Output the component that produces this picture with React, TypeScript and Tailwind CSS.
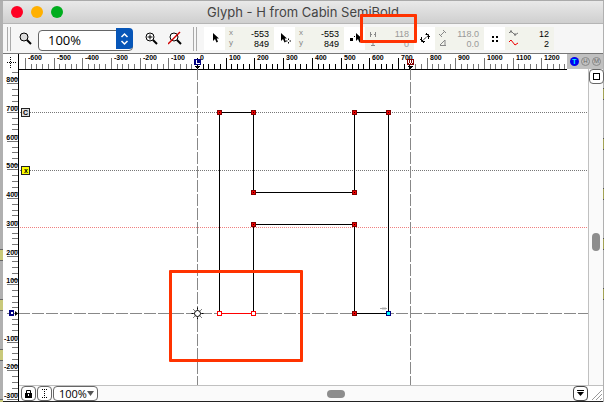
import React from 'react'

const UNIT = 0.287
const range = (from: number, to: number, step: number) =>
  Array.from({ length: Math.floor((to - from) / step) + 1 }, (_, i) => from + i * step)
const px = (units: number) => Math.round(units * UNIT)

const rulerFont = "'Liberation Sans', sans-serif"

function HorizontalRuler() {
  return (
    <svg className="block h-[17px] w-full min-w-0 flex-1" aria-label="Horizontal ruler">
      <g transform="translate(178 0)">
        {range(-600, 1340, 20).map((u) => {
          const major = u % 100 === 0
          const color = u < 0 || u > 740 ? '#777' : '#000'
          return <rect key={u} x={px(u)} y={major ? 4 : 10} width="1" height={major ? 11 : 5} fill={color} />
        })}
        {range(-600, 1200, 100).map((u) => (
          <text key={u} x={px(u) + 3} y="6" fontSize="7" fontWeight="700" fontFamily={rulerFont}>
            {u}
          </text>
        ))}
        <g shapeRendering="crispEdges">
          <rect x="-3" y="5" width="7" height="6" fill="#000080" />
          <path d="M-.5 6v3.500h3" stroke="#fff" fill="none" />
          <path d="M-2 12h5l-2.500 3z" />
        </g>
        <g shapeRendering="crispEdges">
          <rect x="210" y="5" width="7" height="6" fill="#800000" />
          <path d="M211.500 6v3M213.500 6v3M215.500 6v3M212 9.500h1M214 9.500h1" stroke="#fff" />
          <path d="M211 12h5l-2.500 3z" />
        </g>
      </g>
      <rect y="15" width="100%" height="1" />
    </svg>
  )
}

function VerticalRuler() {
  return (
    <svg className="block h-full w-4 shrink-0 bg-white" aria-label="Vertical ruler">
      <g transform="translate(0 244)">
        {range(-300, 840, 20).map((u) => {
          const major = u % 100 === 0
          return <rect key={u} x={major ? 4 : 9} y={-px(u)} width={major ? 11 : 6} height="1" fill="#777" />
        })}
        {range(-300, 800, 100).filter((u) => u !== 0).map((u) => (
          <text key={u} x="15" y={-px(u) - 1} fontSize="7" fontWeight="700" textAnchor="end" fontFamily={rulerFont}>
            {u}
          </text>
        ))}
        <rect x="6" y="-3" width="5" height="6" fill="#000080" />
        <rect x="8" y="-1" width="2" height="2" fill="#fff" />
        <path d="M12-2l3 2.500-3 2.500z" />
      </g>
      <rect x="15" width="1" height="100%" />
    </svg>
  )
}

const nodes = [[22, -201], [56, -201], [157, -201], [191, -201], [56, -121], [157, -121], [56, -89], [157, -89], [157, 0]]

function Canvas() {
  return (
    <svg className="block h-full w-full" aria-label="Glyph outline H">
      <g transform="translate(178 244)" shapeRendering="crispEdges" fill="none">
        <path d="M-177-200.500H1200M-177-142.500H1200" stroke="#777" strokeDasharray="1 1" />
        <path d="M-177-85.500H1200" stroke="#f08080" strokeDasharray="1 1" />
        <path d="M-179 .5H1200" stroke="#888" strokeDasharray="12 2" />
        <path d="M.5-245V1200M213.500-245V1200" stroke="#888" strokeDasharray="12 2" />
        <path d="M22.500 .5V-200.500H56.500V-120.500H157.500V-200.500H191.500V.5H157.500V-88.500H56.500V.5" stroke="#000" />
        <path d="M22 .5h35" stroke="#f00" />
        {nodes.map(([x, y]) => (
          <g key={`${x},${y}`}>
            <rect x={x - 1.5} y={y - 1.5} width="4" height="4" fill="#f00000" stroke="#800000" />
            <rect x={x} y={y} width="1" height="1" fill="#200" />
          </g>
        ))}
        <rect x="20.500" y="-1.500" width="4" height="4" fill="#fff" stroke="#f00" />
        <rect x="54.500" y="-1.500" width="4" height="4" fill="#fff" stroke="#f00" />
        <rect x="189.500" y="-1.500" width="4" height="4" fill="#0ff" stroke="#000080" />
        <path d="M183-4.500h7" stroke="#aaa" />
        <path d="M185-5.500h4M185-3.500h4" stroke="#ddd" />
      </g>
      <g transform="translate(178.500 244.500)" stroke="#000" fill="#fff">
        <circle r="3" />
        <path d="M0-6v2M0 4v2M-6 0h2M4 0h2M-4-4l1 1M4-4l-1 1M-4 4l1-1M4 4l-1-1" />
      </g>
      <g shapeRendering="crispEdges">
        <rect x="2.500" y="39.500" width="8" height="8" fill="#ddd" stroke="#222" />
        <rect x="2.500" y="97.500" width="8" height="8" fill="#ff0" stroke="#222" />
      </g>
      <text x="4" y="46" fontSize="7" fontWeight="700" fontFamily={rulerFont}>C</text>
      <text x="5" y="104" fontSize="7" fontWeight="700" fontFamily={rulerFont}>x</text>
    </svg>
  )
}

function Magnifier({ kind, label }: { kind: 'plain' | 'plus' | 'none'; label: string }) {
  return (
    <button aria-label={label} className="h-4 w-4 shrink-0">
      <svg width="16" height="16" viewBox="0 0 16 16" fill="none">
        <circle cx="6" cy="6" r="4" fill={kind === 'plain' ? '#ddd' : '#fff'} stroke="#000" />
        <path d="M9 9l4 4" stroke="#000" strokeWidth="2" />
        {kind === 'plus' && <path d="M6 3.500v5M3.500 6h5" stroke="#000" />}
        {kind === 'none' && <path d="M0 13L12 1" stroke="#d00000" strokeWidth="1.500" />}
      </svg>
    </button>
  )
}

const arrow = <path d="M0 0v8l2-2 1.500 3.500 1.500-.8L3.700 5.500H6z" fill="#000" />

const icons = {
  pointer: <g transform="translate(9 6)">{arrow}</g>,
  offset: (
    <g>
      <g transform="translate(7 6)">{arrow}</g>
      <path d="M14.500 11.500v5M12 14h5" stroke="#000" />
      <rect x="13.500" y="13" width="2" height="2" fill="#fff" />
    </g>
  ),
  drag: (
    <g>
      <path d="M6 11h3v3h-3zM10 9h1v1h-1z" fill="#000" />
      <g transform="translate(12 6)">{arrow}</g>
    </g>
  ),
  distance: (
    <g fill="none" stroke="#000">
      <path d="M8 14l7-6" strokeDasharray="2 1" />
      <path d="M7.500 10v4.500H11M6 12l4 4M11.500 7.500h3V12M12 6l4 4" />
    </g>
  ),
  corners: <path d="M8 9h2v2h-2zM12 9h2v2h-2zM8 13h2v2h-2zM12 13h2v2h-2z" fill="#000" />,
}

type ReadoutProps = { icon: React.ReactNode; symbols: React.ReactNode; values: [string, string]; muted?: boolean }

function Readout({ icon, symbols, values, muted }: ReadoutProps) {
  return (
    <div className="flex h-[23px] w-[70px] shrink-0">
      <svg className="block h-full w-[21px] bg-white">{icon}</svg>
      <div className="flex flex-1 justify-between bg-[#f2f3ec] pr-[5px] pl-1">
        <div className="w-3 pt-px text-[8px] leading-[10px] text-[#888]">{symbols}</div>
        <div className={muted ? 'pt-[2px] text-right text-[9px] leading-[10px] text-[#999]' : 'pt-[2px] text-right text-[9px] leading-[10px] text-black'}>
          <div>{values[0]}</div>
          <div>{values[1]}</div>
        </div>
      </div>
    </div>
  )
}

const xy = (
  <>
    <div>x</div>
    <div>y</div>
  </>
)
const spans = (
  <svg width="12" height="20" stroke="#888" fill="none">
    <path d="M1.500 4v5M6.500 4v5M2 6.500h1M5 6.500h1M2 13.500h4M2 17.500h4M4 14v3" />
  </svg>
)
const angles = (
  <svg width="12" height="20" stroke="#888" fill="none">
    <path d="M1 8l5-5M0 6l3 3M4 2l3 3M1 17.500h6M1 17l5-5v5" />
  </svg>
)
const waves = (
  <svg width="12" height="20" fill="none">
    <path d="M0 5l2-2 4 4 3-2M2 2v3M6 5v3" stroke="#777" />
    <path d="M0 14l2-2 4 5 3-2" stroke="#e00" />
  </svg>
)

function Grip() {
  return <div className="h-6 w-1 shrink-0 border-x border-[#aaa]" />
}

function Toolbar() {
  return (
    <div className="flex h-[30px] shrink-0 items-center overflow-hidden border-t border-[#b5b5b5] bg-[#f6f6f6] pl-1">
      <Grip />
      <div className="flex w-[182px] shrink-0 items-center pl-[7px]">
        <Magnifier kind="plain" label="Zoom" />
        <div className="relative ml-1 h-[21px] w-[95px]">
          <select aria-label="Zoom level" className="h-full w-full appearance-none rounded border border-[#666] bg-white pl-[9px] font-['Open_Sans',sans-serif] text-[13px] leading-[19px] text-black">
            <option>100%</option>
          </select>
          <svg className="pointer-events-none absolute top-0 right-0 h-[21px] w-[17px] rounded-r bg-[#0756b8]" fill="none" stroke="#fff" strokeWidth="1.500">
            <path d="M5.500 9l3-3 3 3M5.500 13l3 3 3-3" />
          </svg>
        </div>
        <div className="ml-[11px] flex gap-2">
          <Magnifier kind="plus" label="Zoom in" />
          <Magnifier kind="none" label="Actual size" />
        </div>
      </div>
      <Grip />
      <div className="flex pl-[7px]">
        <Readout icon={icons.pointer} symbols={xy} values={['-553', '849']} />
        <Readout icon={icons.offset} symbols={xy} values={['-553', '849']} />
        <Readout icon={icons.drag} symbols={spans} values={['118', '0']} muted />
        <Readout icon={icons.distance} symbols={angles} values={['118.0', '0.0']} muted />
        <Readout icon={icons.corners} symbols={waves} values={['12', '2']} />
      </div>
    </div>
  )
}

function TitleBar() {
  return (
    <header className="flex h-[22px] shrink-0 items-center bg-linear-to-b from-[#e9e9e9] to-[#cfcfcf] px-2">
      <div className="flex w-[60px] gap-2">
        <button aria-label="Close" className="h-3 w-3 rounded-full bg-[#ff0024]" />
        <button aria-label="Minimize" className="h-3 w-3 rounded-full bg-[#ffb000]" />
        <button aria-label="Full screen" className="h-3 w-3 rounded-full bg-[#00ad1e]" />
      </div>
      <h1 className="flex-1 pr-[60px] text-center font-[Inter,sans-serif] text-[13px] leading-[22px] text-[#444]">Glyph - H from Cabin SemiBold</h1>
    </header>
  )
}

function ModeButtons() {
  return (
    <div className="flex h-[15px] w-9 shrink-0 items-center gap-[2px] bg-[#c0c0c0] pl-[3px]">
      <button aria-label="T mode" className="h-[9px] w-[9px] rounded-full bg-[#0000f0] text-[7px] leading-[9px] font-bold text-[#0ff]">T</button>
      <button aria-label="H mode" className="h-[9px] w-[9px] rounded-full border border-[#888] text-[6px] leading-[7px] text-[#666]">H</button>
      <button aria-label="M mode" className="h-[9px] w-[9px] rounded-full border border-[#888] text-[6px] leading-[7px] text-[#666]">M</button>
    </div>
  )
}

function BottomBar() {
  return (
    <div className="flex h-4 shrink-0 border-t border-[#c0c0c0] bg-[#fafafa]">
      <button aria-label="Lock" className="ml-[2px] flex w-[15px] items-center justify-center rounded border border-[#666] bg-white">
        <svg width="7" height="9" fill="none">
          <rect y="4" width="7" height="5" fill="#000" />
          <path d="M1.500 4V1.500h4V4" stroke="#000" />
          <rect x="3" y="5" width="1" height="2" fill="#fff" />
        </svg>
      </button>
      <button aria-label="Grid" className="ml-px flex w-[15px] items-center justify-center rounded border border-[#666] bg-white">
        <svg width="7" height="9" stroke="#000" strokeDasharray="1 1">
          <path d="M1 .5h5M1 8.500h5M3.500 2v5" />
        </svg>
      </button>
      <div className="relative ml-px w-[45px]">
        <select aria-label="View scale" className="block h-full w-full appearance-none rounded border border-[#666] bg-white pl-[5px] font-['Open_Sans',sans-serif] text-[11px] leading-[13px]">
          <option>100%</option>
        </select>
        <svg className="pointer-events-none absolute top-1 right-1 h-[6px] w-[7px]">
          <path d="M0 1h7l-3.500 5z" fill="#555" />
        </svg>
      </div>
      <div className="flex flex-1 items-center justify-center">
        <div className="h-2 w-[18px] rounded-full bg-[#8d8d8d]" />
      </div>
      <button aria-label="Page menu" className="flex w-[15px] items-center justify-center rounded border border-[#444] bg-white">
        <svg width="7" height="7">
          <path d="M0 0h7v1H0zM0 2h7L3.500 6z" />
        </svg>
      </button>
      <svg className="h-[15px] w-[15px] bg-white" stroke="#999">
        <path d="M4 14L14 4M8 14l6-6M12 14l2-2" />
      </svg>
    </div>
  )
}

function Backdrop({ className, bars }: { className: string; bars: string }) {
  return (
    <div className={className}>
      <div className={bars} />
      <div className="h-[38px]" />
      <div className={bars} />
      <div className="h-[38px]" />
      <div className={bars} />
      <div className="h-[38px]" />
      <div className={bars} />
      <div className="h-[38px]" />
      <div className={bars} />
    </div>
  )
}

export default function App() {
  return (
    <div className="relative flex h-screen w-full overflow-hidden border-t border-[#aaa] bg-[#b0b0b0] font-['Liberation_Sans',sans-serif]">
      <Backdrop className="w-[3px] shrink-0 pt-[248px]" bars="h-3 border-y border-[#666] bg-[#c9c97a]" />
      <main className="flex min-w-0 flex-1 flex-col border-b border-[#222] bg-white">
        <TitleBar />
        <Toolbar />
        <div className="flex h-4 shrink-0 border-t border-[#777] bg-white">
          <svg className="block h-4 w-4 shrink-0" fill="none" stroke="#000" aria-label="Ruler origin">
            <path d="M4 8.500h10M7.500 3v11" strokeDasharray="1 1" />
            <path d="M15.500 0v16M0 15.500h16" />
          </svg>
          <HorizontalRuler />
          <ModeButtons />
        </div>
        <div className="flex min-h-0 flex-1">
          <VerticalRuler />
          <div className="flex min-w-0 flex-1 flex-col">
            <div className="flex min-h-0 flex-1">
              <div className="min-w-0 flex-1">
                <Canvas />
              </div>
              <div className="flex w-[15px] shrink-0 flex-col items-center border-l border-[#c0c0c0] bg-[#fafafa]">
                <button aria-label="Preview" className="flex h-[15px] w-[15px] items-center justify-center rounded border border-[#666] bg-white">
                  <span className="h-[7px] w-[7px] border border-black" />
                </button>
                <div className="mt-[149px] h-[18px] w-2 rounded-full bg-[#8d8d8d]" />
              </div>
            </div>
            <BottomBar />
          </div>
        </div>
      </main>
      <Backdrop className="w-px shrink-0 pt-[87px]" bars="h-3 border-y border-[#555] bg-[#a3a355]" />
      <div className="pointer-events-none absolute top-[13px] left-[360px] h-[29px] w-[57px] rounded-[1px] border-3 border-[#ff3300]" />
      <div className="pointer-events-none absolute top-[269px] left-[169px] h-[92px] w-[134px] rounded-[1px] border-3 border-[#ff3300]" />
    </div>
  )
}
